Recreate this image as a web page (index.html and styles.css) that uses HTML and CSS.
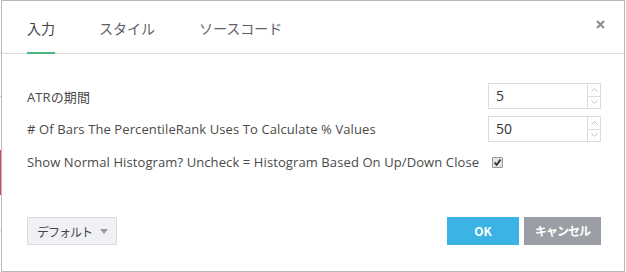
FILE: index.html
```html
<!DOCTYPE html>
<html>

<head>
	<meta charset="utf-8">
	<title>ATR Percentile</title>
	<link rel="stylesheet" href="styles.css">
</head>

<body>
	<div class="dialog">
		<div class="dlg-head">
			<div class="tabs">
				<span class="tab tab-active">入力</span>
				<span class="tab">スタイル</span>
				<span class="tab">ソースコード</span>
			</div>
			<span class="close-btn">
				<svg width="9" height="9" viewBox="0 0 9 9">
					<path d="M1 1 L8 8 M8 1 L1 8" stroke="#8a8c90" stroke-width="2" />
				</svg>
			</span>
		</div>
		<div class="dlg-body">
			<div class="row">
				<span class="label">ATRの期間</span>
				<div class="spin">
					<span class="spin-val">5</span>
					<span class="spin-btns">
						<span class="arr"><svg width="7" height="4" viewBox="0 0 7 4"><path d="M0.5 3.5 L3.5 0.5 L6.5 3.5" stroke="#b4c0cc" fill="none" /></svg></span>
						<span class="arr arr-down"><svg width="7" height="4" viewBox="0 0 7 4"><path d="M0.5 0.5 L3.5 3.5 L6.5 0.5" stroke="#b4c0cc" fill="none" /></svg></span>
					</span>
				</div>
			</div>
			<div class="row">
				<span class="label"># Of Bars The PercentileRank Uses To Calculate % Values</span>
				<div class="spin">
					<span class="spin-val">50</span>
					<span class="spin-btns">
						<span class="arr"><svg width="7" height="4" viewBox="0 0 7 4"><path d="M0.5 3.5 L3.5 0.5 L6.5 3.5" stroke="#b4c0cc" fill="none" /></svg></span>
						<span class="arr arr-down"><svg width="7" height="4" viewBox="0 0 7 4"><path d="M0.5 0.5 L3.5 3.5 L6.5 0.5" stroke="#b4c0cc" fill="none" /></svg></span>
					</span>
				</div>
			</div>
			<div class="row row-check">
				<span class="label">Show Normal Histogram? Uncheck = Histogram Based On Up/Down Close</span>
				<span class="check">
					<svg width="9" height="9" viewBox="0 0 9 9">
						<path d="M1.5 4.5 L3.6 6.8 L7.6 1.6" stroke="#333" stroke-width="1.8" fill="none" />
					</svg>
				</span>
			</div>
		</div>
		<div class="dlg-foot">
			<span class="btn-default">デフォルト<span class="caret"></span></span>
			<div class="foot-right">
				<span class="btn btn-ok">OK</span>
				<span class="btn btn-cancel">キャンセル</span>
			</div>
		</div>
	</div>
</body>

</html>
```

FILE: styles.css
```css
body {
	margin: 0;
	background-color: #fff;
	background-image: linear-gradient(to bottom,
			#fff 0, #fff 52px, #ccc 52px, #ccc 53px, #fff 53px,
			#fff 96px, #ccc 96px, #ccc 97px, #fff 97px,
			#fff 150px, #e0455a 150px, #e0455a 195px, #fff 195px,
			#fff 230px, #ccc 230px, #ccc 231px, #fff 231px);
	background-size: 1px 100%;
	background-repeat: no-repeat;
	font-family: "Open Sans", "Noto Sans CJK JP", sans-serif;
	color: #4a4a4a;
}

.dialog {
	margin-left: 1px;
	width: 622px;
	height: 270px;
	border: 1px solid #b9b9b9;
	background: #fff;
	display: flex;
	flex-direction: column;
}

.dlg-head {
	height: 52px;
	border-bottom: 1px solid #dcdcdc;
	display: flex;
	align-items: stretch;
	justify-content: space-between;
	padding: 0 19px 0 25px;
}

.tabs {
	display: flex;
	gap: 44px;
}

.tab {
	font-family: "Noto Sans CJK JP", sans-serif;
	font-size: 14px;
	color: #5c6069;
	padding-top: 17px;
	margin-bottom: -1px;
	border-bottom: 2px solid transparent;
}

.tab-active {
	color: #3e434c;
	border-bottom-color: #4fb57f;
}

.close-btn {
	display: flex;
	align-items: flex-start;
	padding-top: 19px;
}

.dlg-body {
	padding: 29px 23px 0 25px;
	display: flex;
	flex-direction: column;
	gap: 7px;
	height: 134px;
}

.row {
	height: 26px;
	display: flex;
	align-items: center;
	justify-content: space-between;
}

.row-check {
	justify-content: flex-start;
	gap: 13px;
}

.label {
	font-size: 13px;
	letter-spacing: 0.1px;
	color: #4a4a4a;
}

.spin {
	display: flex;
	height: 26px;
}

.spin-val {
	width: 91px;
	border: 1px solid #dcdcdc;
	font-size: 14px;
	color: #333;
	padding-left: 7px;
	line-height: 24px;
}

.spin-btns {
	width: 12px;
	border: 1px solid #dcdcdc;
	border-left: none;
	display: flex;
	flex-direction: column;
}

.arr {
	flex: 1;
	display: flex;
	align-items: center;
	justify-content: center;
}

.arr-down {
	border-top: 1px solid #dcdcdc;
}

.check {
	width: 9px;
	height: 9px;
	border: 1px solid #999;
	border-radius: 1px;
	background: #e4e4e4;
	display: flex;
}

.dlg-foot {
	display: flex;
	justify-content: space-between;
	padding: 0 23px 0 25px;
}

.btn-default {
	height: 28px;
	width: 90px;
	box-sizing: border-box;
	border: 1px solid #d8dade;
	background: #f0f1f5;
	font-family: "Noto Sans CJK JP", sans-serif;
	font-size: 12px;
	letter-spacing: -1px;
	color: #444;
	padding-left: 9px;
	display: flex;
	align-items: center;
	white-space: nowrap;
}

.caret {
	width: 0;
	height: 0;
	border-left: 4px solid transparent;
	border-right: 4px solid transparent;
	border-top: 5px solid #9a9ca0;
	margin-left: 8px;
}

.foot-right {
	display: flex;
	gap: 5px;
}

.btn {
	height: 28px;
	line-height: 28px;
	color: #fff;
	font-weight: bold;
	text-align: center;
	font-family: "Noto Sans CJK JP", sans-serif;
}

.btn-ok {
	width: 72px;
	background: #3bb3e4;
	font-size: 12px;
}

.btn-cancel {
	width: 77px;
	background: #9c9ea5;
	font-size: 12px;
	letter-spacing: -1px;
}
```
